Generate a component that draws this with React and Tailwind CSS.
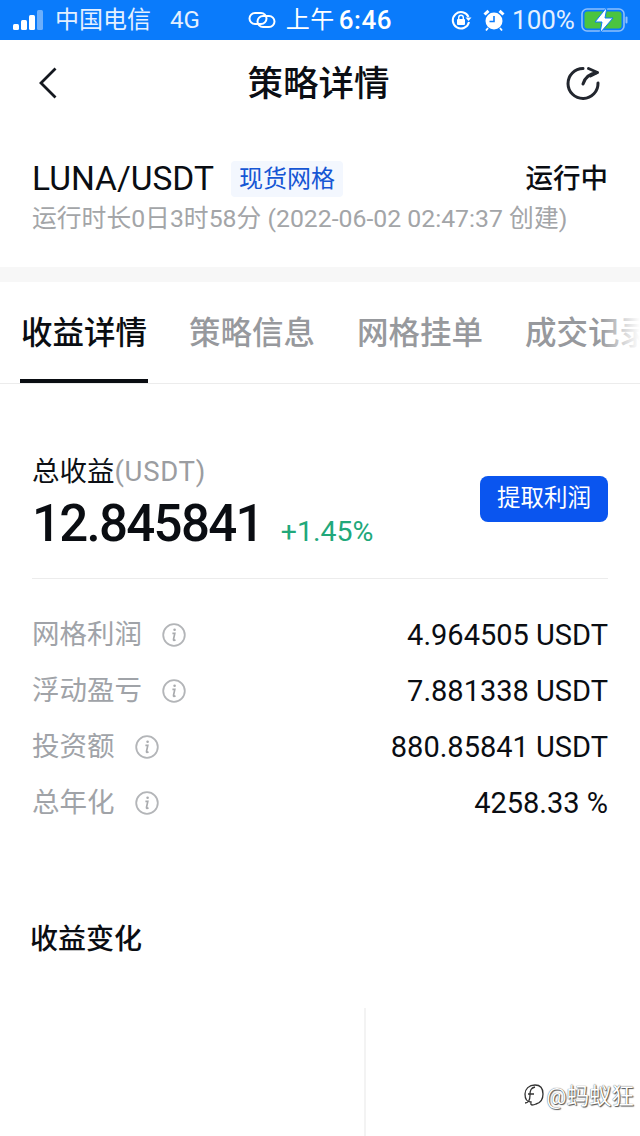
import React from 'react';

const StatusBar = () => (
  <div className="h-10 bg-[#0a7bfb] flex items-center text-white text-[24px] leading-none">
    <svg width="34" height="22" viewBox="0 0 34 22" className="ml-[12px]">
      <rect x="1" y="15" width="6" height="6" rx="1.5" fill="#fff" />
      <rect x="9" y="11" width="6" height="10" rx="1.5" fill="#fff" />
      <rect x="17" y="6" width="6" height="15" rx="1.5" fill="#fff" />
      <rect x="25" y="1" width="6" height="20" rx="1.5" fill="#fff" opacity="0.4" />
    </svg>
    <span className="ml-[9px] text-[#e4f0ff]">中国电信</span>
    <span className="ml-[19px] text-[#e4f0ff]">4G</span>
    <svg width="28" height="20" viewBox="0 0 28 20" fill="none" stroke="#fff" strokeWidth="2" className="ml-[48px]">
      <rect x="1.5" y="3" width="17" height="11" rx="5.5" />
      <rect x="9.5" y="6" width="17" height="11" rx="5.5" />
    </svg>
    <span className="ml-[10px] tracking-[0.5px]">上午</span>
    <span className="font-medium ml-[4px] text-[26px] tracking-[0.5px]">6:46</span>
    <svg width="22" height="22" viewBox="0 0 22 22" fill="none" className="ml-[58px]">
      <path d="M18.5 8A8.2 8.2 0 1 0 19 13" stroke="#fff" strokeWidth="2" />
      <path d="M15.5 8.5h6l-3 3.5z" fill="#fff" />
      <rect x="7" y="10" width="8" height="6" rx="1" fill="#fff" />
      <path d="M8.7 10V8.5a2.3 2.3 0 0 1 4.6 0V10" stroke="#fff" strokeWidth="1.4" />
    </svg>
    <svg width="22" height="24" viewBox="0 0 22 24" fill="none" className="ml-[11px]">
      <circle cx="11" cy="13" r="8.5" fill="#fff" />
      <path d="M11 8v5.5H6.5" stroke="#0a7bfb" strokeWidth="1.6" />
      <path d="M1.5 6.5 5.5 2.8M20.5 6.5l-4-3.7" stroke="#fff" strokeWidth="3" />
      <path d="M5 20l-2 2.5M17 20l2 2.5" stroke="#fff" strokeWidth="1.8" />
    </svg>
    <span className="ml-[7px] text-[26px] text-[#e4f0ff]">100%</span>
    <svg width="48" height="26" viewBox="0 0 48 26" fill="none" className="ml-[6px]">
      <rect x="1" y="2" width="42" height="22" rx="5" stroke="#8ec0fb" strokeWidth="1.6" />
      <rect x="3.5" y="4.5" width="37" height="17" rx="3" fill="#4bc43f" />
      <rect x="44.5" y="9.5" width="2" height="7" rx="1" fill="#8ec0fb" />
      <path d="M26 0 14 15h7l-2 11 13-15h-8z" fill="#fff" stroke="#0a7bfb" strokeWidth="1" />
    </svg>
  </div>
);

const Header = () => (
  <div className="h-[85px] flex items-center justify-between pl-[39px] pr-[38px]">
    <svg width="32" height="36" viewBox="0 0 32 36" fill="none" stroke="#14181f" strokeWidth="2.8">
      <path d="M16.5 3.5 2 18l14.5 14.5" />
    </svg>
    <span className="mt-[4px] text-[35.5px] font-medium text-[#0b0e14] leading-none">策略详情</span>
    <svg width="36" height="36" viewBox="0 0 36 36" fill="none" stroke="#22262e" strokeWidth="3" strokeLinecap="round" strokeLinejoin="round">
      <path d="M17 3.5A15 15 0 1 0 32 18" />
      <path d="M22.5 3.5 31.5 7.5 24.5 11" />
      <path d="M31 7.5C24 8.5 19 12 17 19" />
    </svg>
  </div>
);

const Stat = ({ label, value }) => (
  <div className="h-14 flex items-center justify-between">
    <div className="flex items-center gap-[20px]">
      <span className="text-[27.5px] text-[#a0a3a8] leading-none">{label}</span>
      <svg width="24" height="24" viewBox="0 0 24 24" fill="none">
        <circle cx="12" cy="12" r="10.8" stroke="#b3b5b8" strokeWidth="1.8" />
        <circle cx="12.6" cy="6.8" r="1.3" fill="#a9abae" />
        <path d="M10.4 10.4h2.4l-1.3 6c-.2 1 .6 1.3 2 .4" stroke="#a9abae" strokeWidth="1.7" />
      </svg>
    </div>
    <span className="text-[29px] text-[#0a0d12] leading-none">{value}</span>
  </div>
);

const tabs = ['收益详情', '策略信息', '网格挂单', '成交记录'];

export default function App() {
  return (
    <div className="relative w-[640px] h-[1136px] overflow-hidden bg-white font-['Roboto','Noto_Sans_CJK_SC',sans-serif]">
      <StatusBar />
      <Header />

      <div className="h-[142px] px-8 pt-[36px]">
        <div className="flex items-center justify-between h-9">
          <div className="flex items-center">
            <span className="text-[33.5px] text-[#0a0d12] leading-none">LUNA/USDT</span>
            <span className="ml-[17px] h-9 w-[112px] flex items-center justify-center rounded-[4px] bg-[#f3f7fe] text-[#1656d4] text-[24px] leading-none">现货网格</span>
          </div>
          <span className="text-[27.5px] font-medium text-[#0a0d12] leading-none">运行中</span>
        </div>
        <div className="mt-[6px] text-[24.8px] text-[#a3a5a8] leading-8 whitespace-nowrap">运行时长0日3时58分 (2022-06-02 02:47:37 创建)</div>
      </div>

      <div className="h-[15px] bg-[#f7f7f7]" />

      <div className="h-[102px] flex pl-5 border-b border-[#ececec] overflow-hidden relative">
        {tabs.map((t, i) => (
          <div key={t} className={`relative shrink-0 w-[128px] mr-[40px] flex items-center justify-center pt-[2px] text-[31.5px] leading-none font-medium whitespace-nowrap ${i === 0 ? 'text-[#0a0d12]' : 'text-[#97999d]'}`}>
            {t}
            {i === 0 && <div className="absolute left-0 right-0 bottom-0 h-[4px] bg-[#0a0d12]" />}
          </div>
        ))}
        <div className="absolute right-0 top-0 bottom-0 w-[40px] bg-gradient-to-r from-white/0 to-white" />
      </div>

      <div className="px-8">
        <div className="h-[195px] pt-[72px] border-b border-[#ececec] flex justify-between">
          <div>
            <div className="text-[27.5px] leading-[32px] text-[#0c0f14]">总收益<span className="text-[#9b9da1] tracking-[0.7px]">(USDT)</span></div>
            <div className="flex items-baseline mt-[8px]">
              <span className="text-[51px] font-medium leading-[56px] text-[#0a0d12] tracking-[-1.7px]">12.845841</span>
              <span className="ml-[18px] text-[28.5px] text-[#21a87a] leading-none">+1.45%</span>
            </div>
          </div>
          <button className="mt-[20px] w-[128px] h-[46px] rounded-[8px] bg-[#0a55ef] text-white text-[23.5px] leading-none">提取利润</button>
        </div>

        <div className="pt-[28px]">
          <Stat label="网格利润" value="4.964505 USDT" />
          <Stat label="浮动盈亏" value="7.881338 USDT" />
          <Stat label="投资额" value="880.85841 USDT" />
          <Stat label="总年化" value="4258.33 %" />
        </div>

        <div className="mt-[95px] -ml-[2px] text-[28px] font-medium leading-none text-[#0a0d12]">收益变化</div>
      </div>

      <div className="mt-[54px] ml-[364px] w-[2px] h-[130px] bg-[#f3f3f3]" />

      <div className="absolute right-[6px] bottom-[26px] flex items-center text-white text-[22.5px] leading-none [text-shadow:0_0_1px_#333,1px_1px_1px_#555]">
        <svg width="24" height="28" viewBox="0 0 24 28" fill="none" stroke="#333" strokeWidth="1.3">
          <path d="M10 23c-2-.5-1-2-1-3-4 0-6-3-6-8s4-9 10-9 8 3 8 9-3 9-7 10c-1 .5-3 1-4 1z" />
          <path d="M3 21c4 0 5-3 5-8s1-7 5-8M6 12h6" />
        </svg>
        <span>@蚂蚁狂</span>
      </div>
    </div>
  );
}
